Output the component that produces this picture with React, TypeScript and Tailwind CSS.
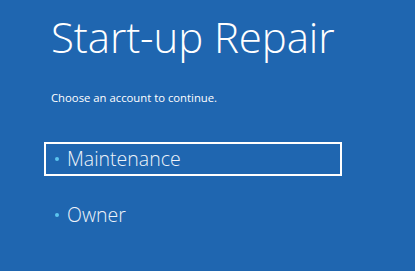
import React from 'react';

const accounts = ['Maintenance', 'Owner'];

export default function App() {
  return (
    <div className="w-[415px] h-[271px] bg-[#1f66b0] overflow-hidden" style={{ fontFamily: '"Open Sans", "Noto Sans", sans-serif' }}>
      <div className="pl-[51px] pt-[8px]">
        <h1 className="text-[42px] leading-[57px] font-light text-white tracking-[-0.1px]">Start-up Repair</h1>
        <p className="mt-[25px] text-[11.3px] leading-[16px] text-white">Choose an account to continue.</p>
      </div>
      <div className="mt-[36px] pl-[44px] flex flex-col gap-[22px]">
        {accounts.map((name, i) => (
          <div
            key={name}
            className={`w-[298px] h-[34px] flex items-center pl-[9px] border-2 ${i === 0 ? 'border-white' : 'border-transparent'}`}
          >
            <span className="w-[4px] h-[4px] rounded-full bg-[#5cc4ee] mr-[8px]" />
            <span className="text-[19.5px] font-light text-[#eef3fa] leading-none">{name}</span>
          </div>
        ))}
      </div>
    </div>
  );
}
